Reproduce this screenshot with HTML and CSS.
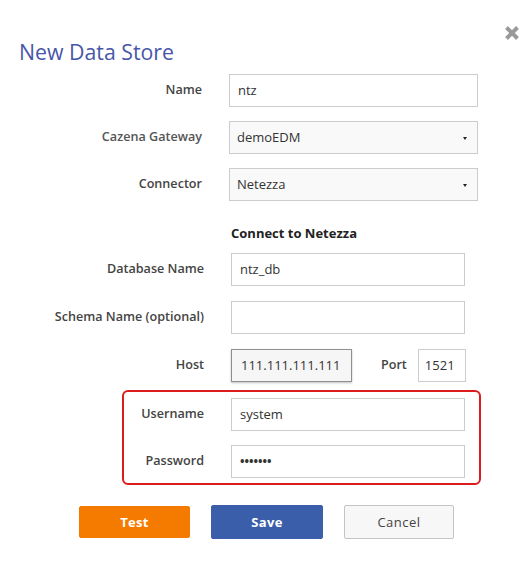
FILE: index.html
```html
<!DOCTYPE html>
<html>
<head>
<meta charset="utf-8">
<title>New Data Store</title>
<link rel="stylesheet" href="styles.css">
</head>
<body>
<div class="dialog">
  <div class="header">
    <h1 class="title">New Data Store</h1>
    <svg class="close" width="16" height="16" viewBox="0 0 16 16" aria-label="Close">
      <path d="M2.5 2.5 L13.5 13.5 M13.5 2.5 L2.5 13.5" stroke="#9a9a9a" stroke-width="4" stroke-linecap="butt"/>
    </svg>
  </div>

  <div class="grid grid-main">
    <div class="label">Name</div>
    <div class="field">ntz</div>
    <div class="label label-light">Cazena Gateway</div>
    <div class="field select">demoEDM<span class="caret"></span></div>
    <div class="label">Connector</div>
    <div class="field select">Netezza<span class="caret"></span></div>
  </div>

  <div class="section-title">Connect to Netezza</div>

  <div class="grid grid-conn">
    <div class="label">Database Name</div>
    <div class="field">ntz_db</div>
    <div class="label">Schema Name (optional)</div>
    <div class="field"></div>
    <div class="label">Host</div>
    <div class="host-row">
      <div class="field host">111.111.111.111</div>
      <div class="label port-label">Port</div>
      <div class="field port">1521</div>
    </div>
  </div>

  <div class="cred-box">
    <div class="grid grid-cred">
      <div class="label">Username</div>
      <div class="field">system</div>
      <div class="label">Password</div>
      <div class="field pw">&bull;&bull;&bull;&bull;&bull;&bull;&bull;</div>
    </div>
  </div>

  <div class="buttons">
    <button class="btn btn-test">Test</button>
    <button class="btn btn-save">Save</button>
    <button class="btn btn-cancel">Cancel</button>
  </div>
</div>
</body>
</html>
```

FILE: styles.css
```css
html, body {
  margin: 0;
  padding: 0;
  background: #ffffff;
}

body {
  font-family: "Open Sans", "Liberation Sans", Arial, sans-serif;
  color: #333333;
  width: 530px;
  height: 574px;
  overflow: hidden;
}

.dialog {
  width: 530px;
}

.header {
  display: flex;
  justify-content: space-between;
  align-items: flex-start;
  padding: 25px 10px 0 19px;
}

.title {
  margin: 12px 0 0 0;
  font-size: 21.3px;
  font-weight: 400;
  line-height: 30px;
  color: #4756a8;
}

.close {
  display: block;
}

.grid {
  display: grid;
  column-gap: 27px;
  align-items: center;
}

.grid-main {
  grid-template-columns: 202px 249px;
  grid-auto-rows: 33px;
  row-gap: 14px;
  margin-top: 7px;
}

.label {
  font-size: 12.6px;
  font-weight: 600;
  color: #444444;
  text-align: right;
  line-height: 18px;
  margin-top: -2px;
  white-space: nowrap;
}

.label-light {
  color: #555555;
}

.field {
  box-sizing: border-box;
  height: 33px;
  border: 1px solid #cccccc;
  background: #ffffff;
  font-size: 13px;
  line-height: 31px;
  padding: 0 8px;
  color: #333333;
  position: relative;
  white-space: nowrap;
}

.select {
  background: #f9f9f9;
  padding-left: 7px;
}

.caret {
  position: absolute;
  right: 10px;
  top: 15px;
  width: 0;
  height: 0;
  border-left: 2px solid transparent;
  border-right: 2px solid transparent;
  border-top: 3px solid #222222;
}

.section-title {
  margin: 22px 0 0 231px;
  font-size: 13px;
  font-weight: 700;
  line-height: 20px;
  color: #222222;
}

.grid-conn {
  grid-template-columns: 204px 234px;
  grid-auto-rows: 33px;
  row-gap: 15px;
  margin-top: 10px;
}

.host-row {
  display: flex;
  align-items: center;
}

.host {
  width: 121px;
  background: #f6f6f6;
  border-color: #8f8f8f;
  box-shadow: 0 1px 2px rgba(0, 0, 0, 0.25);
  padding-left: 9px;
  flex: none;
}

.port-label {
  margin-left: 29px;
  text-align: left;
}

.port {
  width: 48px;
  margin-left: 11px;
  padding: 0 6px;
  flex: none;
}

.cred-box {
  box-sizing: border-box;
  margin: 8px 0 0 122px;
  width: 359px;
  border: 2px solid #dc1c1c;
  border-radius: 6px;
  padding: 6px 14px 5px 0;
}

.grid-cred {
  grid-template-columns: 80px 234px;
  grid-auto-rows: 33px;
  row-gap: 14px;
}

.pw {
  font-weight: 700;
  font-size: 12px;
  letter-spacing: 0;
}

.buttons {
  display: flex;
  align-items: center;
  margin-top: 20px;
  padding-left: 79px;
}

.btn {
  font-family: "Open Sans", "Liberation Sans", Arial, sans-serif;
  font-size: 13px;
  font-weight: 700;
  border-radius: 2px;
  padding: 0;
  cursor: pointer;
  letter-spacing: 0.3px;
}

.btn-test {
  width: 111px;
  height: 32px;
  background: #f57a00;
  border: 1px solid #f57a00;
  color: #ffffff;
}

.btn-save {
  width: 112px;
  height: 34px;
  margin-left: 21px;
  background: #3a5ea9;
  border: 1px solid #3a5ea9;
  color: #ffffff;
}

.btn-cancel {
  width: 110px;
  height: 34px;
  margin-left: 21px;
  background: #f7f7f7;
  border: 1px solid #c4c4c4;
  color: #444444;
  font-weight: 400;
  letter-spacing: 0.5px;
}
```
